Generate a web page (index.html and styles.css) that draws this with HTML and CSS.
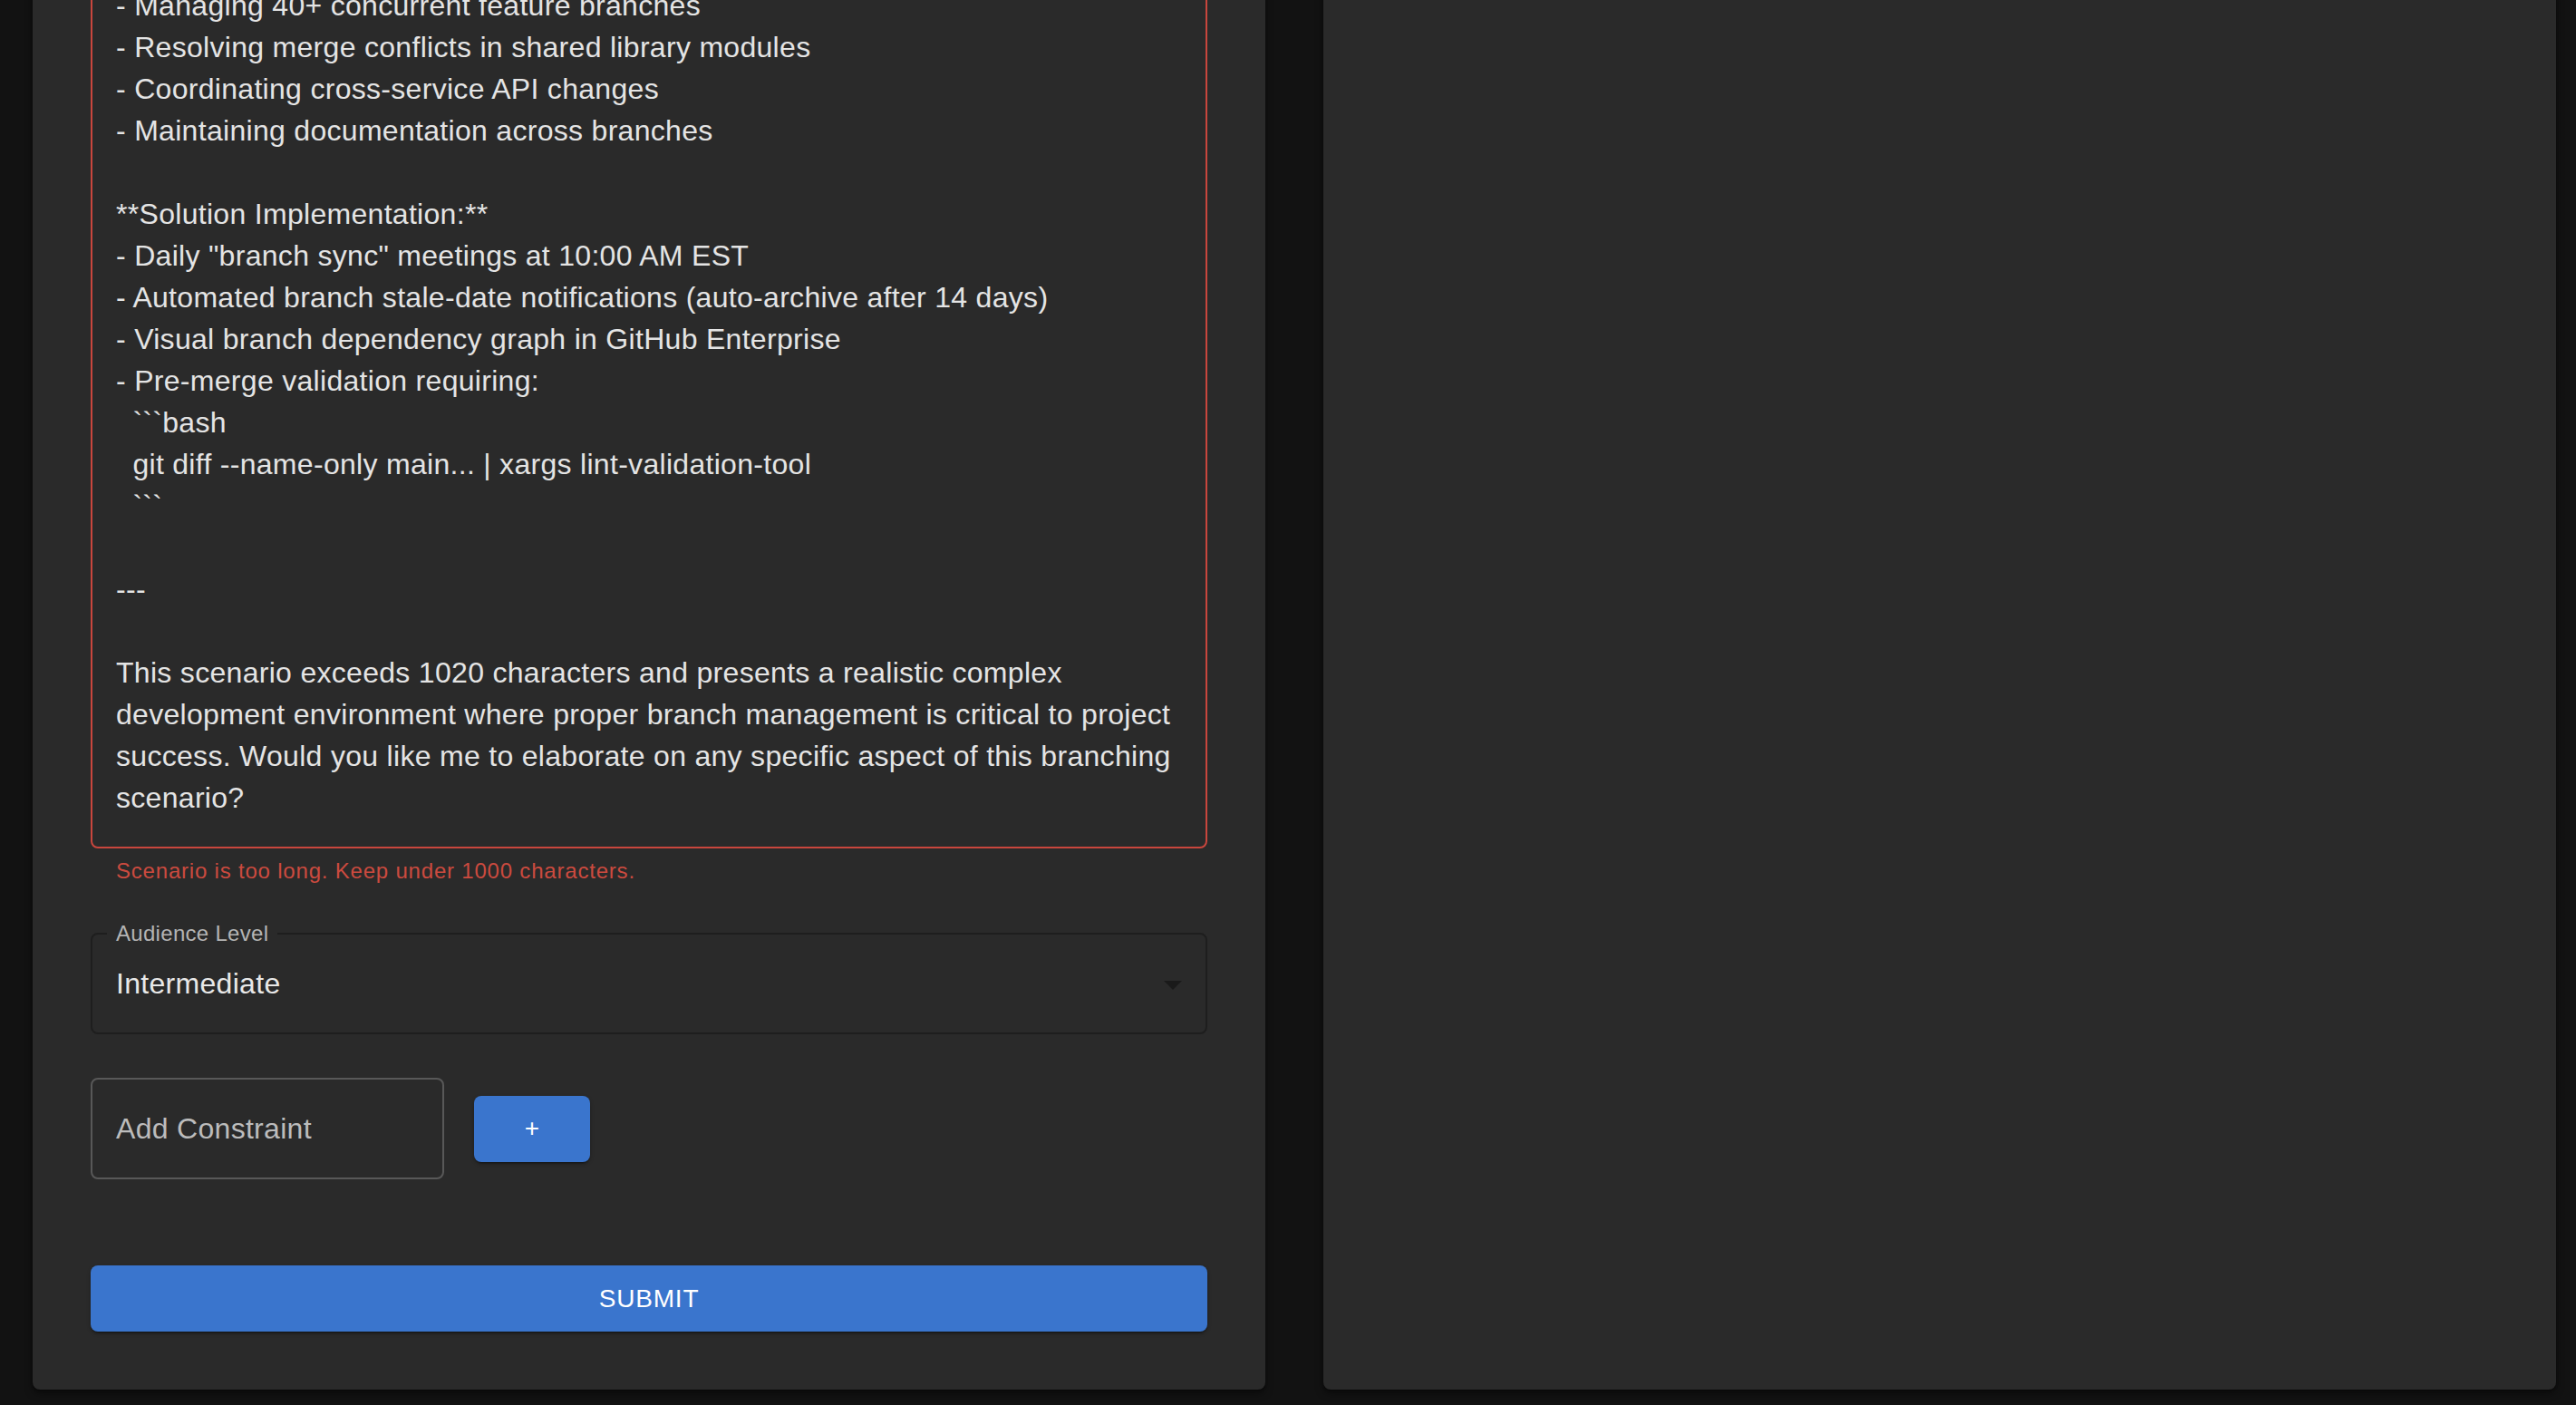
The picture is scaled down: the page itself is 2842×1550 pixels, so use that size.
FILE: index.html
```html
<!DOCTYPE html>
<html lang="en">
<head>
<meta charset="utf-8">
<title>Scenario Form</title>
<link rel="stylesheet" href="styles.css">
</head>
<body>
<div class="page">
  <div class="panels">
    <section class="panel form">
      <div class="textarea error" role="textbox" aria-multiline="true">**Branching Challenges:**
- Managing 40+ concurrent feature branches
- Resolving merge conflicts in shared library modules
- Coordinating cross-service API changes
- Maintaining documentation across branches

**Solution Implementation:**
- Daily "branch sync" meetings at 10:00 AM EST
- Automated branch stale-date notifications (auto-archive after 14 days)
- Visual branch dependency graph in GitHub Enterprise
- Pre-merge validation requiring:
  ```bash
  git diff --name-only main... | xargs lint-validation-tool
  ```

---

This scenario exceeds 1020 characters and presents a realistic complex
development environment where proper branch management is critical to project
success. Would you like me to elaborate on any specific aspect of this branching
scenario?</div>
      <p class="helper">Scenario is too long. Keep under 1000 characters.</p>

      <div class="select">
        <span class="select-label">Audience Level</span>
        <span class="select-value">Intermediate</span>
        <svg class="select-icon" viewBox="0 0 24 24" aria-hidden="true"><path d="M7 10l5 5 5-5z"/></svg>
      </div>

      <div class="constraint-row">
        <div class="input">Add Constraint</div>
        <button class="btn btn-add" type="button">+</button>
      </div>

      <button class="btn btn-submit" type="button">SUBMIT</button>
    </section>
    <section class="panel"></section>
  </div>
</div>
</body>
</html>
```

FILE: styles.css
```css
* { box-sizing: border-box; }

html, body {
  margin: 0;
  padding: 0;
  background: #121212;
  font-family: "Liberation Sans", Arial, Helvetica, sans-serif;
}

.page {
  height: 1550px;
  overflow: hidden;
  display: flex;
  flex-direction: column;
  justify-content: flex-end;
  padding: 0 22px 17px 36px;
}

.panels {
  display: flex;
  gap: 64px;
  align-items: stretch;
}

.panel {
  flex: 0 0 1360px;
  background: #2a2a2a;
  border-radius: 8px;
  box-shadow: 0 4px 10px rgba(0, 0, 0, 0.45), 0 1px 3px rgba(0, 0, 0, 0.3);
}

.form {
  padding: 64px;
  display: flex;
  flex-direction: column;
}

.textarea {
  border: 2px solid #c9463d;
  border-radius: 8px;
  padding: 31px 26px;
  color: #e4e4e4;
  font-size: 32px;
  line-height: 46px;
  letter-spacing: 0.3px;
  white-space: pre;
  overflow: hidden;
}

.helper {
  margin: 5px 28px 0;
  color: #cc4a3f;
  font-size: 24px;
  line-height: 40px;
  letter-spacing: 0.8px;
}

.select {
  position: relative;
  margin-top: 48px;
  height: 112px;
  border: 2px solid #1e1e1e;
  border-radius: 8px;
  display: flex;
  align-items: center;
  padding: 0 26px;
}

.select-label {
  position: absolute;
  top: -15px;
  left: 16px;
  padding: 0 10px;
  background: #2a2a2a;
  color: #b4b4b4;
  font-size: 24px;
  line-height: 28px;
  letter-spacing: 0.3px;
}

.select-value {
  color: #e8e8e8;
  font-size: 32px;
  line-height: 46px;
  letter-spacing: 0.3px;
}

.select-icon {
  position: absolute;
  right: 12px;
  top: 50%;
  width: 48px;
  height: 48px;
  margin-top: -23px;
  fill: #1a1a1a;
}

.constraint-row {
  margin-top: 48px;
  display: flex;
  align-items: center;
  gap: 33px;
}

.input {
  width: 390px;
  height: 112px;
  border: 2px solid #585858;
  border-radius: 8px;
  padding: 0 26px;
  display: flex;
  align-items: center;
  color: #bcbcbc;
  font-size: 32px;
  line-height: 46px;
  letter-spacing: 0.3px;
}

.btn {
  border: 0;
  border-radius: 8px;
  background: #3a75cd;
  color: #ffffff;
  font-family: inherit;
  cursor: pointer;
  box-shadow: 0 3px 2px -2px rgba(0, 0, 0, 0.4), 0 2px 4px rgba(0, 0, 0, 0.3);
}

.btn-add {
  width: 128px;
  height: 73px;
  font-size: 28px;
  line-height: 1;
  padding: 0;
}

.btn-submit {
  margin-top: 95px;
  height: 73px;
  width: 100%;
  font-size: 28px;
  letter-spacing: 0.8px;
}
```
